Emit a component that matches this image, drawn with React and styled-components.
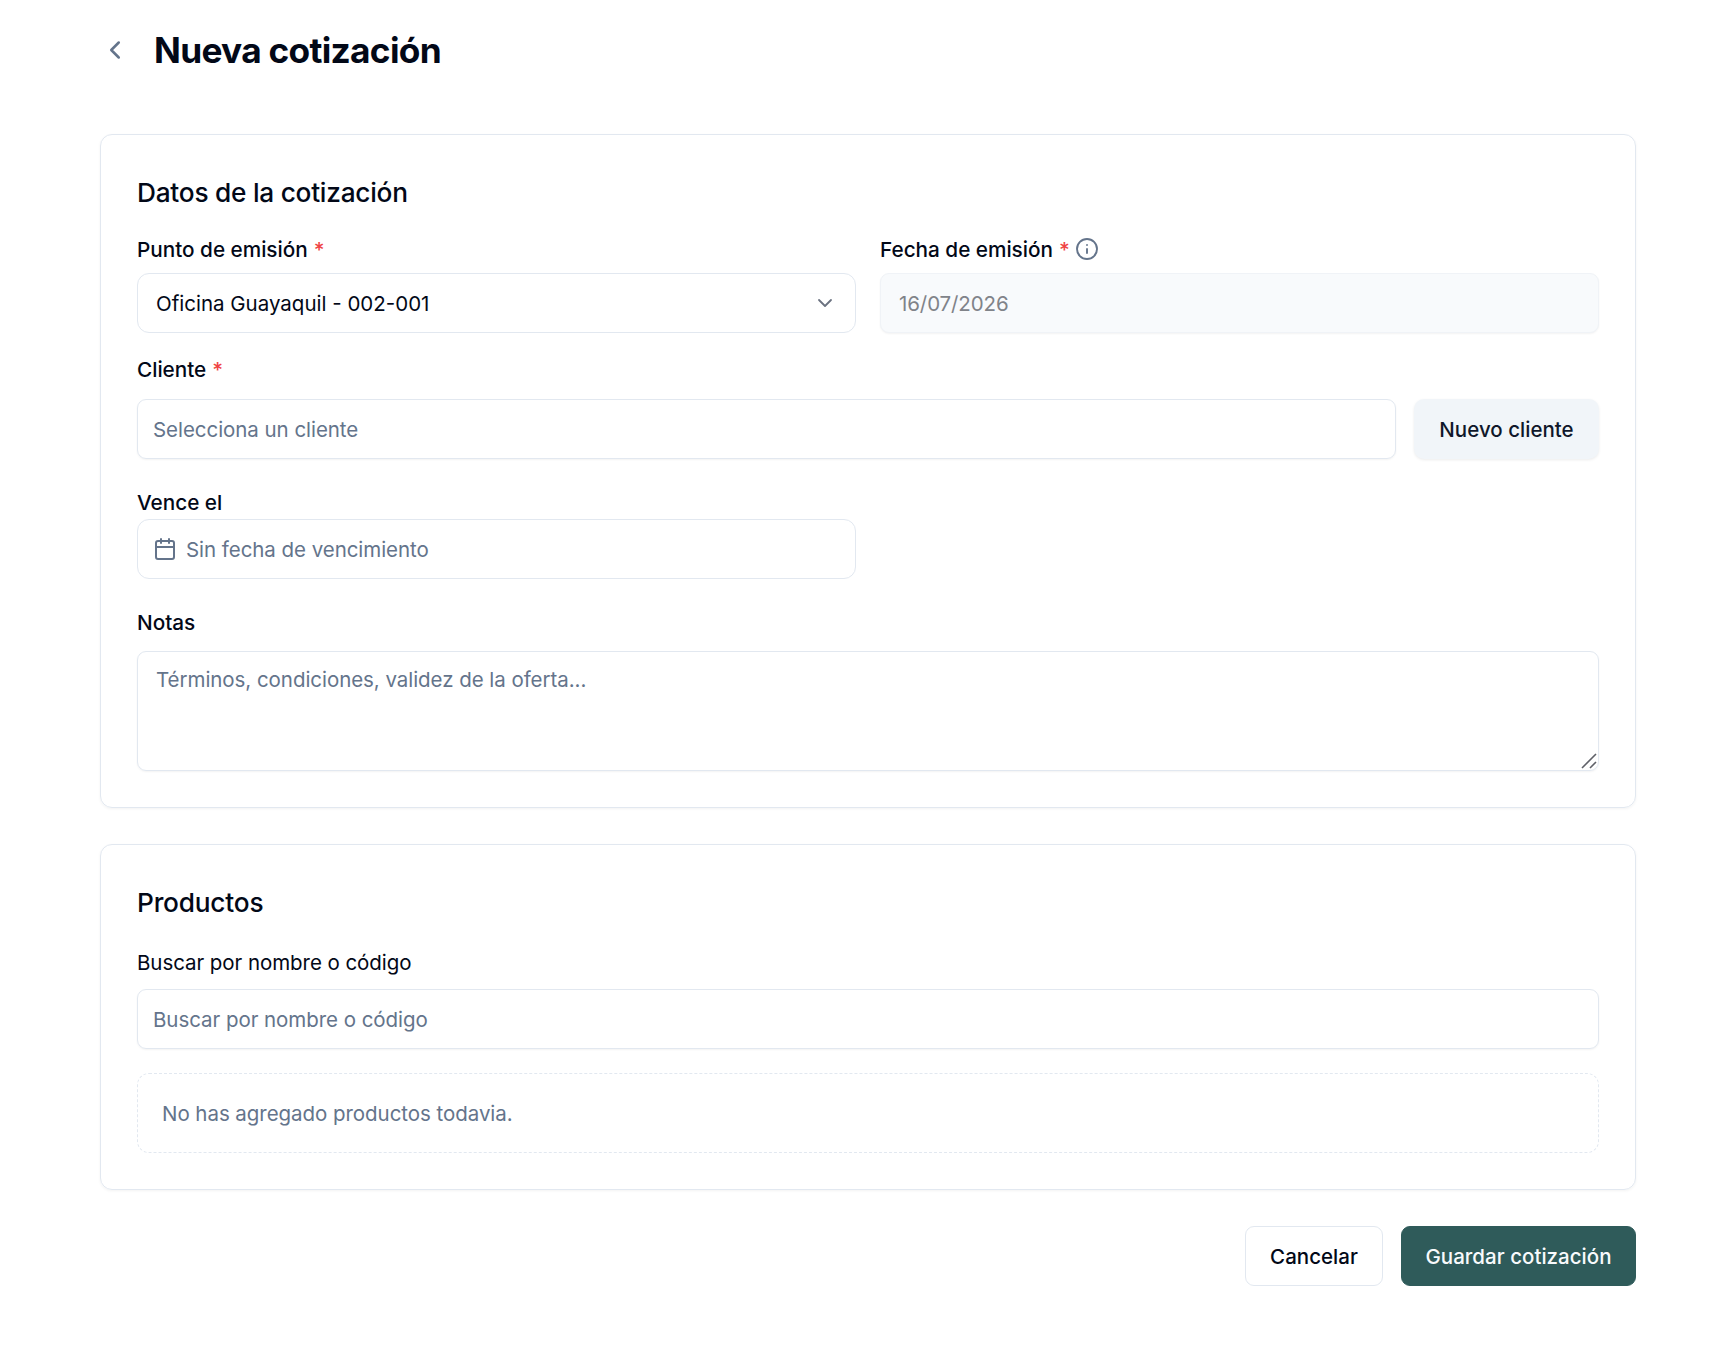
import React from "react"
import styled, { createGlobalStyle } from "styled-components"
import { Calendar, ChevronDown, ChevronLeft, Info } from "lucide-react"

const GlobalStyle = createGlobalStyle`
  *, *::before, *::after {
    box-sizing: border-box;
  }
  body {
    margin: 0;
    background: #ffffff;
    color: #020817;
    font-family: Inter, "Liberation Sans", sans-serif;
    font-size: 20.5px;
    letter-spacing: -0.05px;
    -webkit-font-smoothing: antialiased;
  }
`

const Page = styled.main`
  width: 1536px;
  margin: 0 0 0 100px;
  padding-top: 20px;
`

const Header = styled.header`
  display: flex;
  align-items: center;
  gap: 24px;
  height: 60px;
  margin-bottom: 54px;
`

const BackButton = styled.button`
  display: flex;
  padding: 0;
  border: 0;
  background: none;
  color: #64748b;
`

const Title = styled.h1`
  margin: 0;
  padding-top: 1px;
  font-size: 35.25px;
  line-height: 54px;
  font-weight: 700;
  letter-spacing: -0.7px;
`

const Card = styled.section`
  display: flex;
  flex-direction: column;
  margin-bottom: 36px;
  padding: 36px;
  border: 1px solid #e2e8f0;
  border-radius: 12px;
  box-shadow: 0 1px 3px rgba(0, 0, 0, 0.05);
`

const CardTitle = styled.h2`
  margin: 0;
  padding-top: 1px;
  font-size: 26.25px;
  line-height: 42px;
  font-weight: 500;
  letter-spacing: ${p => p.$tracking || -0.25}px;
`

const Columns = styled.div`
  display: grid;
  grid-template-columns: 1fr 1fr;
  column-gap: 24px;
`

const Field = styled.div`
  display: flex;
  flex-direction: column;
  gap: ${p => p.$gap}px;
  margin-top: ${p => p.$top}px;
`

const Label = styled.div`
  display: flex;
  align-items: center;
  height: 30px;
  line-height: 30px;
  font-size: 20.75px;
  font-weight: 500;
  letter-spacing: -0.02px;

  svg {
    margin: 0 0 2px 5px;
    color: #64748b;
  }
`

const SearchLabel = styled(Label)`
  font-size: 20.5px;
  font-weight: 400;
  letter-spacing: -0.06px;
`

const Required = styled.span`
  margin-left: 6px;
  color: #ef4444;
`

const Control = styled.div`
  display: flex;
  align-items: center;
  flex: ${p => (p.$grow ? 1 : "none")};
  height: 60px;
  padding: 0 ${p => p.$pad || 15}px;
  border: 1px solid #e2e8f0;
  border-radius: 9px;
  color: #64748b;
  box-shadow: 0 1px 2px rgba(0, 0, 0, 0.05);
`

const SelectControl = styled(Control)`
  justify-content: space-between;
  border-radius: 12px;
  color: #020817;
  letter-spacing: 0;
  box-shadow: none;

  svg {
    color: #6b7280;
  }
`

const DateControl = styled(Control)`
  gap: 9px;
  border-radius: 12px;
  box-shadow: none;
`

const DisabledControl = styled(Control)`
  border-color: #f0f3f7;
  background: #f8fafc;
  color: #808389;
  letter-spacing: -0.1px;
`

const ClientRow = styled.div`
  display: flex;
  gap: 18px;
`

const TextArea = styled.div`
  position: relative;
  height: 120px;
  padding: 13px 18px;
  border: 1px solid #e2e8f0;
  border-radius: 9px;
  color: #64748b;
  line-height: 30px;
  box-shadow: 0 1px 2px rgba(0, 0, 0, 0.05);
`

const ResizeHandle = styled.svg`
  position: absolute;
  right: 1px;
  bottom: 1px;
`

const EmptyState = styled.div`
  display: flex;
  align-items: center;
  height: 80px;
  margin-top: 24px;
  padding: 0 24px;
  border: 1px dashed #e2e8f0;
  border-radius: 12px;
  color: #64748b;
`

const Button = styled.button`
  height: 60px;
  width: ${p => p.$width}px;
  padding: 0;
  border: 1px solid #e2e8f0;
  border-radius: 9px;
  background: #ffffff;
  color: #020817;
  font: inherit;
  font-weight: 500;
  letter-spacing: 0.02px;
  white-space: nowrap;
`

const SecondaryButton = styled(Button)`
  border: 0;
  border-radius: 10px;
  background: #f1f5f9;
  color: #0f172a;
  box-shadow: 0 1px 3px rgba(0, 0, 0, 0.08);
`

const PrimaryButton = styled(Button)`
  border-color: #2f5b5a;
  background: #2f5b5a;
  color: #f8fafc;
`

const Actions = styled.footer`
  display: flex;
  justify-content: flex-end;
  gap: 18px;
`

const App = () => (
  <>
    <GlobalStyle />
    <Page>
      <Header>
        <BackButton aria-label="Volver">
          <ChevronLeft size={30} />
        </BackButton>
        <Title>Nueva cotización</Title>
      </Header>

      <Card>
        <CardTitle>Datos de la cotización</CardTitle>
        <Columns>
          <Field $top={21} $gap={8}>
            <Label>
              Punto de emisión <Required>*</Required>
            </Label>
            <SelectControl $pad={18}>
              Oficina Guayaquil - 002-001
              <ChevronDown size={24} strokeWidth={1.8} />
            </SelectControl>
          </Field>
          <Field $top={21} $gap={8}>
            <Label>
              Fecha de emisión <Required>*</Required>
              <Info size={24} strokeWidth={1.9} />
            </Label>
            <DisabledControl $pad={18}>16/07/2026</DisabledControl>
          </Field>
        </Columns>
        <Field $top={22} $gap={14}>
          <Label>
            Cliente <Required>*</Required>
          </Label>
          <ClientRow>
            <Control $grow>Selecciona un cliente</Control>
            <SecondaryButton $width={185}>Nuevo cliente</SecondaryButton>
          </ClientRow>
        </Field>
        <Columns>
          <Field $top={29} $gap={1}>
            <Label>Vence el</Label>
            <DateControl>
              <Calendar size={24} />
              Sin fecha de vencimiento
            </DateControl>
          </Field>
        </Columns>
        <Field $top={29} $gap={13}>
          <Label>Notas</Label>
          <TextArea>
            Términos, condiciones, validez de la oferta...
            <ResizeHandle width="16" height="16" viewBox="0 0 16 16">
              <path
                d="M1 15 15 1M9 15l6-6"
                fill="none"
                stroke="#5f6168"
                strokeWidth="1.6"
              />
            </ResizeHandle>
          </TextArea>
        </Field>
      </Card>

      <Card>
        <CardTitle $tracking={-0.2}>Productos</CardTitle>
        <Field $top={24} $gap={11}>
          <SearchLabel>Buscar por nombre o código</SearchLabel>
          <Control>Buscar por nombre o código</Control>
        </Field>
        <EmptyState>No has agregado productos todavia.</EmptyState>
      </Card>

      <Actions>
        <Button $width={138}>Cancelar</Button>
        <PrimaryButton $width={235}>Guardar cotización</PrimaryButton>
      </Actions>
    </Page>
  </>
)

export default App
